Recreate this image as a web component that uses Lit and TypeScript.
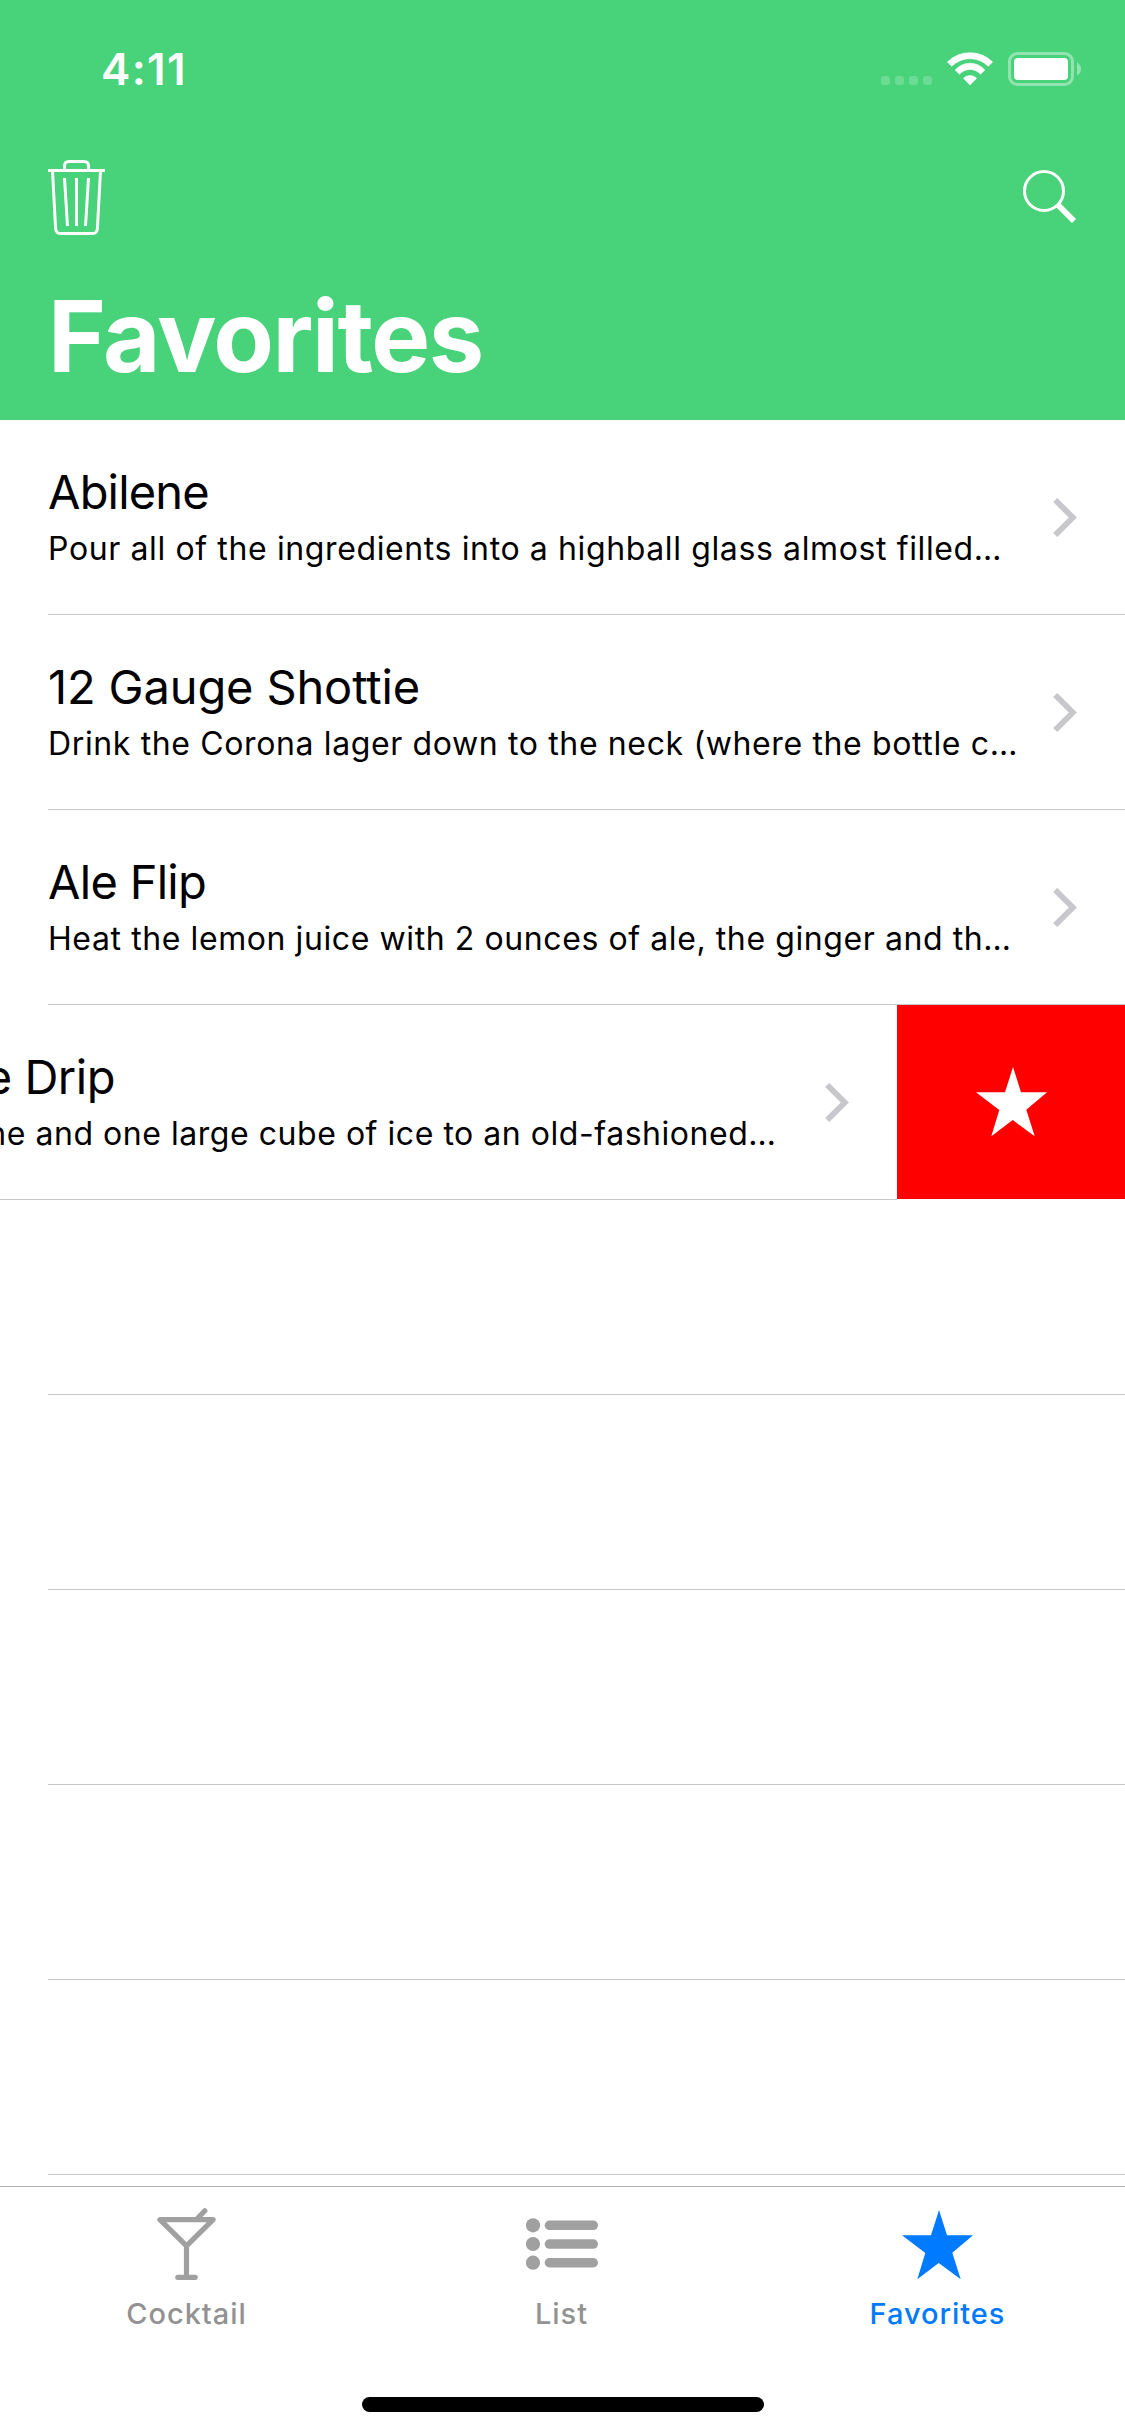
import { LitElement, html, css, svg } from "lit";
import { customElement, property } from "lit/decorators.js";
import { classMap } from "lit/directives/class-map.js";
import { styleMap } from "lit/directives/style-map.js";

interface Drink {
  name: string;
  detail: string;
  nameTracking: number;
  detailTracking: number;
  open?: boolean;
}

const DRINKS: Drink[] = [
  {
    name: "Abilene",
    detail: "Pour all of the ingredients into a highball glass almost filled…",
    nameTracking: -0.8,
    detailTracking: 0.62,
  },
  {
    name: "12 Gauge Shottie",
    detail: "Drink the Corona lager down to the neck (where the bottle c…",
    nameTracking: -0.14,
    detailTracking: 0.63,
  },
  {
    name: "Ale Flip",
    detail: "Heat the lemon juice with 2 ounces of ale, the ginger and th…",
    nameTracking: -0.7,
    detailTracking: 0.59,
  },
  {
    name: "Absinthe Drip",
    detail: "Add absinthe and one large cube of ice to an old-fashioned…",
    nameTracking: -0.5,
    detailTracking: 0.54,
    open: true,
  },
];

const EMPTY_ROWS = [0, 1, 2, 3, 4];

const star = svg`<polygon
  points="37,0 45,25.3 71,25.3 50.3,42.7 58.7,69.3 36.7,53 15.3,69.3 23.3,43 0,25.3 29,25.3"
  fill="currentColor" />`;

@customElement("status-bar")
export class StatusBar extends LitElement {
  static styles = css`
    :host {
      display: flex;
      align-items: flex-start;
      justify-content: space-between;
      height: 132px;
      padding: 0 44px 0 101px;
      box-sizing: border-box;
      color: #fff;
    }
    .time {
      padding-top: 42px;
      font-size: 44px;
      font-weight: 600;
      line-height: 54px;
      letter-spacing: 1.33px;
    }
    .indicators {
      display: flex;
      align-items: flex-end;
      gap: 15px;
      padding-top: 52px;
    }
    .signal {
      display: flex;
      gap: 5px;
      padding-bottom: 1px;
    }
    .dot {
      width: 9px;
      height: 9px;
      border-radius: 3px;
      background: rgba(255, 255, 255, 0.2);
    }
    svg {
      display: block;
    }
  `;

  render() {
    return html`
      <div class="time">4:11</div>
      <div class="indicators">
        <div class="signal">
          <span class="dot"></span><span class="dot"></span><span class="dot"></span
          ><span class="dot"></span>
        </div>
        <svg width="46" height="34" viewBox="0 0 46 34" fill="#fff" stroke="#fff" stroke-width="0.6" stroke-linejoin="round">
          <path d="M0.4 10A32 32 0 0 1 45.6 10L41.3 14.2A26 26 0 0 0 4.7 14.2Z" />
          <path d="M8.2 18A19.5 19.5 0 0 1 37.8 18L33.5 22.2A14 14 0 0 0 12.5 22.2Z" />
          <path d="M16.4 26.3A9.2 9.2 0 0 1 29.6 26.3L23 33Z" />
        </svg>
        <svg width="73" height="34" viewBox="0 0 73 34">
          <rect x="1.5" y="1.5" width="63" height="31" rx="8" fill="none" stroke="#fff" stroke-opacity="0.4" stroke-width="3" />
          <rect x="6" y="6" width="54" height="22" rx="4" fill="#fff" />
          <path d="M69 10.5C71.4 11.6 73 14 73 17S71.4 22.4 69 23.5Z" fill="#fff" fill-opacity="0.4" />
        </svg>
      </div>
    `;
  }
}

@customElement("nav-header")
export class NavHeader extends LitElement {
  static styles = css`
    :host {
      display: block;
      height: 420px;
      background: #48d27a;
      color: #fff;
    }
    .actions {
      display: flex;
      align-items: flex-start;
      justify-content: space-between;
      height: 144px;
      padding: 28px 49px 0 48px;
      box-sizing: border-box;
    }
    .search {
      margin-top: 10px;
    }
    h1 {
      margin: 0;
      padding-left: 48px;
      font-size: 99px;
      font-weight: 700;
      line-height: 120px;
      letter-spacing: -1.5px;
    }
    svg {
      display: block;
    }
  `;

  render() {
    return html`
      <status-bar></status-bar>
      <div class="actions">
        <svg width="57" height="75" viewBox="0 0 57 75" fill="none" stroke="#fff" stroke-width="3">
          <path d="M0 10.5H57" />
          <path d="M16.5 10.5V6Q16.5 1.5 21 1.5H36Q40.5 1.5 40.5 6V10.5" />
          <path d="M4.5 11L7.6 68.5Q8 73.5 12.5 73.5H44.5Q49 73.5 49.4 68.5L52.5 11" />
          <path d="M16.5 18L19.5 66M28.5 18V66M40.5 18L37.5 66" />
        </svg>
        <svg class="search" width="53" height="53" viewBox="0 0 53 53" fill="none" stroke="#fff">
          <circle cx="21" cy="21" r="19.5" stroke-width="3" />
          <path d="M35.3 35.2L51 51" stroke-width="5.8" />
        </svg>
      </div>
      <h1>Favorites</h1>
    `;
  }
}

@customElement("drink-row")
export class DrinkRow extends LitElement {
  static styles = css`
    :host {
      display: block;
      height: 195px;
      overflow: hidden;
      background: #fff;
    }
    .track {
      display: flex;
      align-items: flex-start;
    }
    .track.open {
      margin-left: -228px;
    }
    .cell {
      flex: none;
      width: 1125px;
      padding-left: 48px;
      box-sizing: border-box;
    }
    .content {
      display: flex;
      align-items: center;
      height: 195px;
      padding-right: 48px;
      border-bottom: 1px solid #c8c7cc;
      box-sizing: border-box;
    }
    .text {
      flex: 1;
      min-width: 0;
      height: 194px;
      padding-top: 42px;
      box-sizing: border-box;
      white-space: nowrap;
      color: #000;
    }
    .name {
      font-size: 47px;
      line-height: 60px;
    }
    .detail {
      margin-top: 6px;
      font-size: 32px;
      line-height: 42px;
    }
    .action {
      display: flex;
      flex: none;
      align-items: center;
      justify-content: center;
      width: 228px;
      height: 194px;
      background: #f00;
      color: #fff;
    }
    svg {
      display: block;
      flex: none;
    }
  `;

  @property({ attribute: false }) drink?: Drink;

  render() {
    const d = this.drink;
    return html`
      <div class=${classMap({ track: true, open: !!d?.open })}>
        <div class="cell">
          <div class="content">
            ${d
              ? html`
                  <div class="text">
                    <div class="name" style=${styleMap({ letterSpacing: `${d.nameTracking}px` })}>${d.name}</div>
                    <div class="detail" style=${styleMap({ letterSpacing: `${d.detailTracking}px` })}>${d.detail}</div>
                  </div>
                  <svg width="24" height="39" viewBox="0 0 24 39">
                    <path d="M2.2 2L19.8 19.5L2.2 37" fill="none" stroke="#c7c7cc" stroke-width="5.8" />
                  </svg>
                `
              : ""}
          </div>
        </div>
        ${d?.open
          ? html`<div class="action">
              <svg width="71" height="70" viewBox="0 0 71 70">${star}</svg>
            </div>`
          : ""}
      </div>
    `;
  }
}

@customElement("tab-bar")
export class TabBar extends LitElement {
  static styles = css`
    :host {
      display: flex;
      flex-direction: column;
      align-items: center;
      flex: none;
      height: 250px;
      border-top: 1px solid #b2b2b2;
      box-sizing: border-box;
      background: #fff;
    }
    .tabs {
      display: grid;
      grid-template-columns: 373px 377px 375px;
      align-self: stretch;
      height: 210px;
      color: #929292;
    }
    .tab {
      display: flex;
      flex-direction: column;
      align-items: center;
    }
    .icon {
      display: flex;
      align-items: flex-end;
      justify-content: center;
      height: 93px;
      color: #a0a0a0;
    }
    .label {
      margin-top: 16px;
      font-size: 29px;
      font-weight: 450;
      line-height: 36px;
      letter-spacing: 0.95px;
    }
    .active,
    .active .icon {
      color: #007aff;
    }
    .list {
      margin-bottom: 9px;
    }
    .home {
      width: 402px;
      height: 15px;
      border-radius: 7.5px;
      background: #000;
    }
    svg {
      display: block;
    }
  `;

  render() {
    return html`
      <div class="tabs">
        <div class="tab">
          <div class="icon">
            <svg width="60" height="72" viewBox="0 0 60 72" fill="none" stroke="currentColor" stroke-width="5.2" stroke-linecap="round" stroke-linejoin="round">
              <path d="M2.9 11.7H56.1L29.5 37.8Z" />
              <path d="M29.5 37.8V69.3M20.8 69.3H38.2M40.8 10L47.8 2.8" />
            </svg>
          </div>
          <div class="label">Cocktail</div>
        </div>
        <div class="tab">
          <div class="icon">
            <svg class="list" width="72" height="53" viewBox="0 0 72 53" fill="currentColor">
              <circle cx="7" cy="7.3" r="7.1" />
              <circle cx="7" cy="26" r="7.1" />
              <circle cx="7" cy="44.7" r="7.1" />
              <rect x="18.7" y="2.6" width="53.3" height="9.5" rx="4.75" />
              <rect x="18.7" y="21.3" width="53.3" height="9.5" rx="4.75" />
              <rect x="18.7" y="40" width="53.3" height="9.5" rx="4.75" />
            </svg>
          </div>
          <div class="label">List</div>
        </div>
        <div class="tab active">
          <div class="icon">
            <svg width="71" height="70.5" viewBox="0 0 71 70.5">${star}</svg>
          </div>
          <div class="label">Favorites</div>
        </div>
      </div>
      <div class="home"></div>
    `;
  }
}

@customElement("app-root")
export class AppRoot extends LitElement {
  static styles = css`
    :host {
      display: flex;
      flex-direction: column;
      width: 1125px;
      height: 2436px;
      overflow: hidden;
      background: #fff;
      font-family: Inter, "Liberation Sans", sans-serif;
    }
    nav-header {
      flex: none;
    }
    .rows {
      flex: 1;
      min-height: 0;
      overflow: hidden;
    }
  `;

  render() {
    return html`
      <nav-header></nav-header>
      <div class="rows">
        ${DRINKS.map((d) => html`<drink-row .drink=${d}></drink-row>`)}
        ${EMPTY_ROWS.map(() => html`<drink-row></drink-row>`)}
      </div>
      <tab-bar></tab-bar>
    `;
  }
}
